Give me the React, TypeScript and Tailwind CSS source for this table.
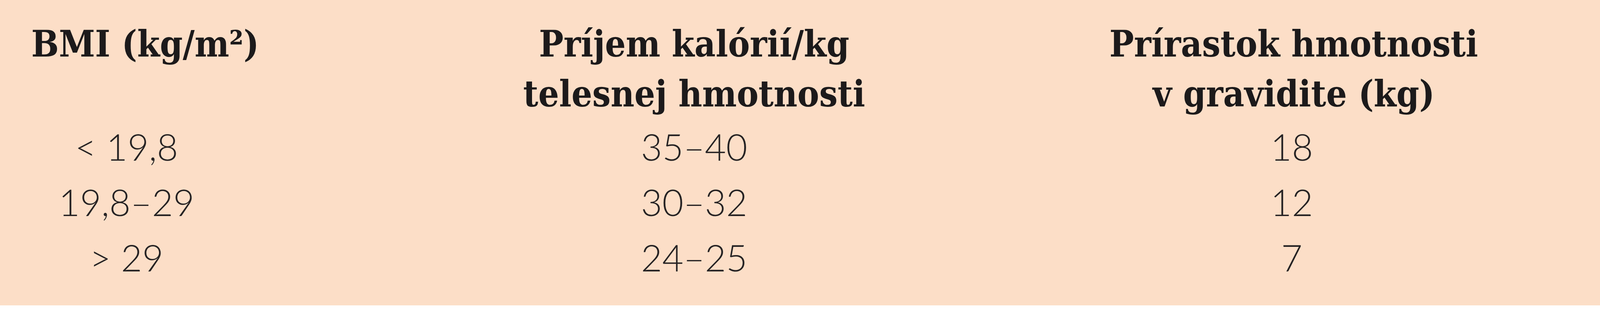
import React from 'react';

type Row = { bmi: string; kcal: string; gain: string };

const rows: Row[] = [
  { bmi: '< 19,8', kcal: '35–40', gain: '18' },
  { bmi: '19,8–29', kcal: '30–32', gain: '12' },
  { bmi: '> 29', kcal: '24–25', gain: '7' },
];

const head =
  "font-['DejaVu_Serif_Condensed','DejaVu_Serif',serif] font-stretch-condensed font-bold text-[93px] leading-[128px] text-[#1c1a1b] whitespace-nowrap";
const cell =
  "font-['Lato','Noto_Sans',sans-serif] font-light text-[94px] leading-[142px] text-[#262324] whitespace-nowrap";

export default function App() {
  return (
    <div className="w-[4284px] h-[800px] bg-white">
      <div className="h-[783px] bg-[#fcdec7] pl-[80px] pt-[49px]">
        <div className="grid grid-cols-[640px_2114px_956px]">
          {/* hlavička */}
          <div className={head}>BMI (kg/m²)</div>
          <div className={`${head} text-center`}>
            <div>Príjem kalórií/kg</div>
            <div>telesnej hmotnosti</div>
          </div>
          <div className={`${head} text-center`}>
            <div>Prírastok hmotnosti</div>
            <div>v gravidite (kg)</div>
          </div>

          {rows.map((r) => (
            <React.Fragment key={r.bmi}>
              <div className={`${cell} w-[488px] text-center`}>{r.bmi}</div>
              <div className={`${cell} text-center`}>{r.kcal}</div>
              <div className={`${cell} text-center pr-[10px]`}>{r.gain}</div>
            </React.Fragment>
          ))}
        </div>
      </div>
    </div>
  );
}
